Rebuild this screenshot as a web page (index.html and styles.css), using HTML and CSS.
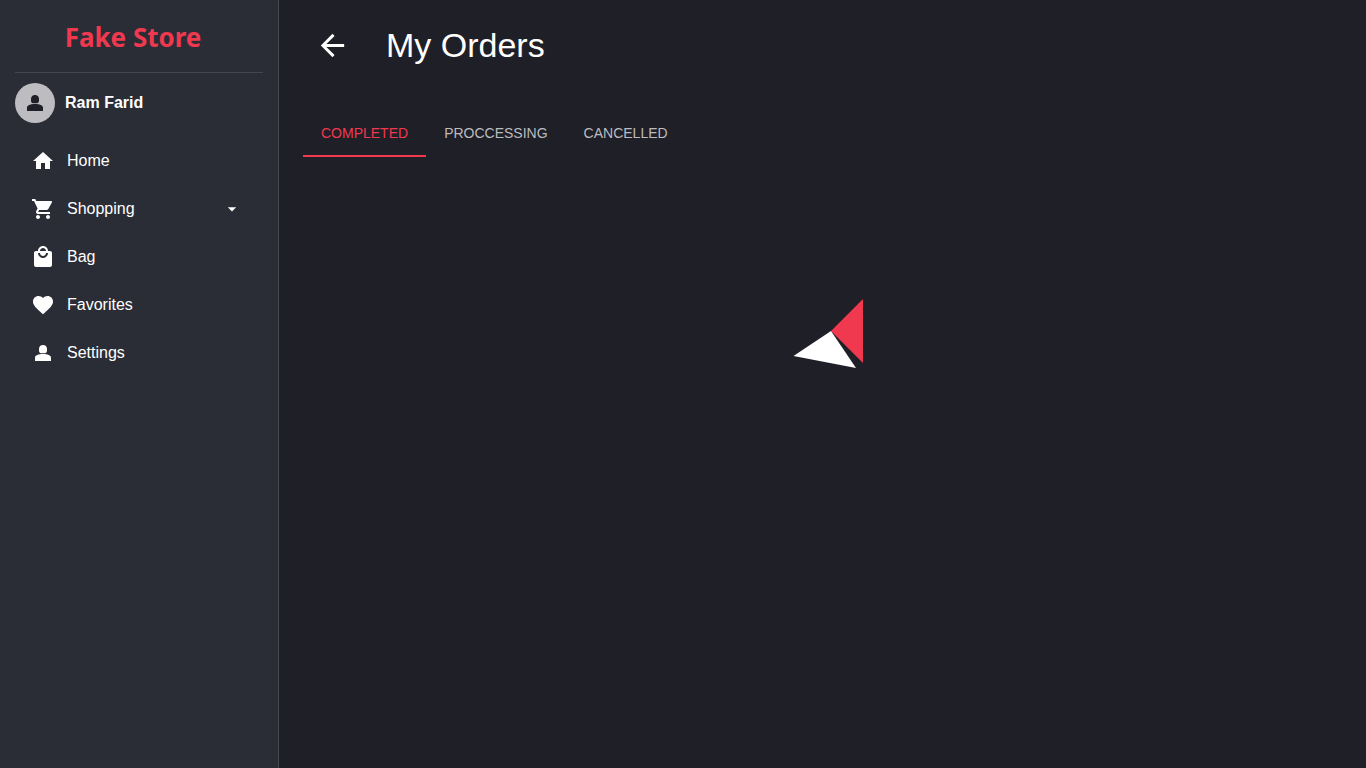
FILE: index.html
```html
<!DOCTYPE html>
<html lang="en">
<head>
    <meta charset="UTF-8">
    <meta name="viewport" content="width=device-width, initial-scale=1.0">
    <title>Fake Store - My Orders</title>
    <link rel="stylesheet" href="styles.css">
</head>
<body>
    <div class="layout">
        <aside class="sidebar">
            <a class="logo" href="#">Fake Store</a>
            <a class="profile" href="#">
                <span class="avatar">
                    <svg class="icon" viewBox="0 0 24 24"><path d="M12 4c-2.400 0-4 1.600-4 4v1.500c0 1.200.6 2.500 1.600 2.700h4.800c1-.2 1.600-1.500 1.600-2.700V8c0-2.400-1.600-4-4-4zm0 9c-4.500 0-8 1.300-8 3.600V20h16v-3.400C20 14.300 16.500 13 12 13z"/></svg>
                </span>
                <span class="username">Ram Farid</span>
            </a>
            <nav class="menu">
                <a class="menu-item" href="#">
                    <svg class="icon" viewBox="0 0 24 24"><path d="M10 20v-6h4v6h5v-8h3L12 3 2 12h3v8z"/></svg>
                    <span>Home</span>
                </a>
                <button class="menu-item" type="button">
                    <svg class="icon" viewBox="0 0 24 24"><path d="M7 18c-1.100 0-1.990.9-1.990 2S5.900 22 7 22s2-.9 2-2-.9-2-2-2zM1 2v2h2l3.600 7.590-1.350 2.450c-.16.28-.25.61-.25.96 0 1.100.9 2 2 2h12v-2H7.420c-.14 0-.25-.11-.25-.25l.03-.12.9-1.630h7.450c.75 0 1.410-.41 1.750-1.030l3.580-6.490c.08-.14.12-.31.12-.48 0-.55-.45-1-1-1H5.210l-.94-2H1zm16 16c-1.100 0-1.990.9-1.990 2s.89 2 1.990 2 2-.9 2-2-.9-2-2-2z"/></svg>
                    <span>Shopping</span>
                    <svg class="caret" viewBox="0 0 24 24"><path d="M7 10l5 5 5-5z"/></svg>
                </button>
                <a class="menu-item" href="#">
                    <svg class="icon" viewBox="0 0 24 24"><path d="M19 6h-2c0-2.760-2.240-5-5-5S7 3.240 7 6H5c-1.100 0-1.990.9-1.990 2L3 20c0 1.100.9 2 2 2h14c1.100 0 2-.9 2-2V8c0-1.100-.9-2-2-2zm-7-3c1.660 0 3 1.340 3 3H9c0-1.660 1.340-3 3-3zm0 10c-2.760 0-5-2.240-5-5h2c0 1.660 1.340 3 3 3s3-1.340 3-3h2c0 2.760-2.240 5-5 5z"/></svg>
                    <span>Bag</span>
                </a>
                <a class="menu-item" href="#">
                    <svg class="icon" viewBox="0 0 24 24"><path d="M12 21.350l-1.450-1.320C5.400 15.360 2 12.280 2 8.500 2 5.420 4.420 3 7.500 3c1.740 0 3.410.81 4.500 2.090C13.090 3.810 14.760 3 16.500 3 19.580 3 22 5.420 22 8.500c0 3.780-3.400 6.860-8.550 11.540L12 21.350z"/></svg>
                    <span>Favorites</span>
                </a>
                <a class="menu-item" href="#">
                    <svg class="icon" viewBox="0 0 24 24"><path d="M12 4c-2.400 0-4 1.600-4 4v1.500c0 1.200.6 2.500 1.600 2.700h4.800c1-.2 1.600-1.500 1.600-2.700V8c0-2.400-1.600-4-4-4zm0 9c-4.500 0-8 1.300-8 3.600V20h16v-3.400C20 14.300 16.500 13 12 13z"/></svg>
                    <span>Settings</span>
                </a>
            </nav>
        </aside>

        <main class="content">
            <header class="page-header">
                <button class="back" type="button" aria-label="Back">
                    <svg viewBox="0 0 24 24"><path d="M20 11H7.830l5.590-5.590L12 4l-8 8 8 8 1.410-1.410L7.830 13H20v-2z"/></svg>
                </button>
                <h1>My Orders</h1>
            </header>
            <div class="tabs" role="tablist">
                <button class="tab active" type="button" role="tab" aria-selected="true">COMPLETED</button>
                <button class="tab" type="button" role="tab" aria-selected="false">PROCCESSING</button>
                <button class="tab" type="button" role="tab" aria-selected="false">CANCELLED</button>
            </div>
            <div class="loader">
                <svg viewBox="0 0 80 80">
                    <path fill="#f0384f" d="M72 8v64L40 40z"/>
                    <path fill="#ffffff" d="M40 40L65 77 2.500 65z"/>
                </svg>
            </div>
        </main>
    </div>
</body>
</html>
```
FILE: styles.css
```css
* {
    box-sizing: border-box;
}

body {
    background-color: #1f1f28;
    color: #ffffff;
    font-family: "Liberation Sans", Arial, sans-serif;
    font-size: 16px;
    margin: 0;
}

a {
    color: inherit;
    text-decoration: none;
}

button {
    background: none;
    border: none;
    color: inherit;
    font: inherit;
    cursor: pointer;
}

svg {
    display: block;
    fill: currentColor;
}

.layout {
    display: flex;
    min-height: 100vh;
}

/* sidebar */
.sidebar {
    flex: 0 0 279px;
    padding: 0 15px;
    background-color: #2b2d36;
    border-right: 1px solid #45464e;
}

.logo {
    display: block;
    height: 73px;
    padding-right: 12px;
    border-bottom: 1px solid #45464e;
    color: #f0384f;
    font-family: "Noto Sans", sans-serif;
    font-size: 26px;
    font-weight: bold;
    line-height: 74px;
    text-align: center;
}

.profile {
    display: flex;
    align-items: center;
    gap: 10px;
    margin-top: 10px;
}

.avatar {
    display: flex;
    align-items: center;
    justify-content: center;
    width: 40px;
    height: 40px;
    border-radius: 50%;
    background-color: #bdbdc1;
    color: #1f1f28;
}

.username {
    font-weight: bold;
}

.icon {
    width: 24px;
    height: 24px;
}

.menu {
    display: flex;
    flex-direction: column;
    margin-top: 14px;
}

.menu-item {
    display: flex;
    align-items: center;
    gap: 12px;
    height: 48px;
    padding: 0 21px 0 16px;
}

.caret {
    width: 20px;
    height: 20px;
    margin-left: auto;
}

/* page */
.content {
    flex: 1;
    padding: 0 7px 0 24px;
}

.page-header {
    display: flex;
    align-items: center;
    gap: 36px;
    height: 90px;
}

.back {
    padding: 0 0 0 12px;
}

.back svg {
    width: 35px;
    height: 35px;
}

h1 {
    margin: 0;
    font-size: 34px;
    font-weight: normal;
}

.tabs {
    display: flex;
    margin-top: 19px;
}

.tab {
    height: 48px;
    padding: 2px 18px 0;
    border-bottom: 2px solid transparent;
    color: #bcbcbf;
    font-size: 14px;
}

.tab.active {
    border-color: #f0384f;
    color: #f0384f;
}

.loader {
    display: flex;
    justify-content: center;
    padding-top: 134px;
}

.loader svg {
    width: 80px;
    height: 80px;
}
```
